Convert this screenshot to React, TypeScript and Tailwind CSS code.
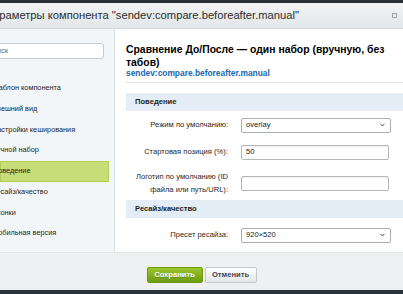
const menu = [
  "Шаблон компонента",
  "Внешний вид",
  "Настройки кеширования",
  "Ручной набор",
  "Поведение",
  "Ресайз/качество",
  "Иконки",
  "Мобильная версия",
];

function Chevron() {
  return (
    <svg width="5" height="4" viewBox="0 0 5 4" className="mr-[5px]">
      <path d="M0.5 0.8 L2.5 3 L4.5 0.8" fill="none" stroke="#555" strokeWidth="1" />
    </svg>
  );
}

function Select({ value }: { value: string }) {
  return (
    <div className="flex h-[15px] w-[150px] items-center justify-between rounded-[2px] border border-[#a9aeb3] bg-white pl-[4px] text-[#222]">
      <span>{value}</span>
      <Chevron />
    </div>
  );
}

function Input({ value }: { value?: string }) {
  return (
    <div className="flex h-[15px] w-[148px] items-center rounded-[2px] border border-[#b3b8bd] bg-white pl-[4px] text-[#222] shadow-[inset_0_1px_1px_rgba(0,0,0,0.06)]">
      {value}
    </div>
  );
}

function Row({ label, children, className }: { label: React.ReactNode; children: React.ReactNode; className: string }) {
  return (
    <div className={"flex items-center " + className}>
      <div className="flex w-[102px] justify-end text-right text-[#1f1f1f]">{label}</div>
      <div className="ml-[13px]">{children}</div>
    </div>
  );
}

export default function App() {
  return (
    <div className="flex h-[294px] w-[403px] flex-col overflow-hidden bg-white font-['Liberation_Sans',Arial,sans-serif] text-[7.6px] text-[#1f1f1f]">
      <div className="h-[3px] bg-[#2b3137]" />
      <div className="flex h-[26px] items-center justify-between border-b border-[#d3d8dc] bg-gradient-to-b from-[#f1f3f5] to-[#e3e7ea] pr-[6px]">
        <span className="ml-[-15px] whitespace-nowrap text-[11.2px] text-[#2c2c2c]">
          Параметры компонента "sendev:compare.beforeafter.manual"
        </span>
        <span className="h-[5px] w-[5px] border border-[#9ba3ab]" />
      </div>

      <div className="flex min-h-0 flex-1">
        <aside className="w-[115px] shrink-0 overflow-hidden border-r border-[#dde2e6] bg-[#f3f6f8] pt-[14px]">
          <div className="ml-[-20px] flex h-[16px] w-[124px] items-center rounded-[3px] border border-[#c6cbd0] bg-white pl-[6px] text-[#666]">
            Поиск
          </div>
          <ul className="mt-[19.5px] text-[7.3px]">
            {menu.map((item) => (
              <li
                key={item}
                className={
                  "flex h-[20.7px] w-[109px] items-center whitespace-nowrap " +
                  (item === "Поведение" ? "border border-[#b3cc5c] bg-[#c6dd78]" : "")
                }
              >
                <span className="ml-[-8px]">{item}</span>
              </li>
            ))}
          </ul>
        </aside>

        <main className="min-w-0 flex-1 overflow-hidden pl-[11px] pt-[13.5px]">
          <h1 className="text-[10.4px] font-bold leading-[13px] text-black">
            Сравнение До/После — один набор (вручную, без табов)
          </h1>
          <div className="text-[8.4px] font-bold leading-[8px] text-[#2067b0]">sendev:compare.beforeafter.manual</div>
          <div className="mt-[5px] border-t border-[#e3e6e9]" />

          <div className="mt-[10px] flex h-[18px] items-center bg-[#e4ecf5] pl-[9px] font-bold">Поведение</div>
          <Row label="Режим по умолчанию:" className="mt-[7px]">
            <Select value="overlay" />
          </Row>
          <Row label="Стартовая позиция (%):" className="mt-[12px]">
            <Input value="50" />
          </Row>
          <Row
            label={<div className="w-[96px] leading-[13px]">Логотип по умолчанию (ID файла или путь/URL):</div>}
            className="mt-[10.5px]"
          >
            <Input />
          </Row>

          <div className="mt-[4px] flex h-[18px] items-center bg-[#e4ecf5] pl-[9px] font-bold">Ресайз/качество</div>
          <Row label="Пресет ресайза:" className="mt-[9.5px]">
            <Select value="920×520" />
          </Row>
        </main>
      </div>

      <footer className="flex h-[38px] justify-center gap-[2px] border-t border-[#e2e5e8] bg-[#eef0f2] pt-[14px]">
        <button className="flex h-[16px] w-[56px] items-center justify-center rounded-[2px] border border-[#6f9a12] bg-gradient-to-b from-[#9ac62a] to-[#6e9b0e] font-bold text-white [text-shadow:0_1px_0_rgba(0,0,0,0.2)]">
          Сохранить
        </button>
        <button className="flex h-[16px] w-[52px] items-center justify-center rounded-[2px] border border-[#c3c7cb] bg-gradient-to-b from-white to-[#e3e6e9] font-bold text-[#3f4650]">
          Отменить
        </button>
      </footer>
      <div className="h-[4px] bg-[#2c343b]" />
    </div>
  );
}
